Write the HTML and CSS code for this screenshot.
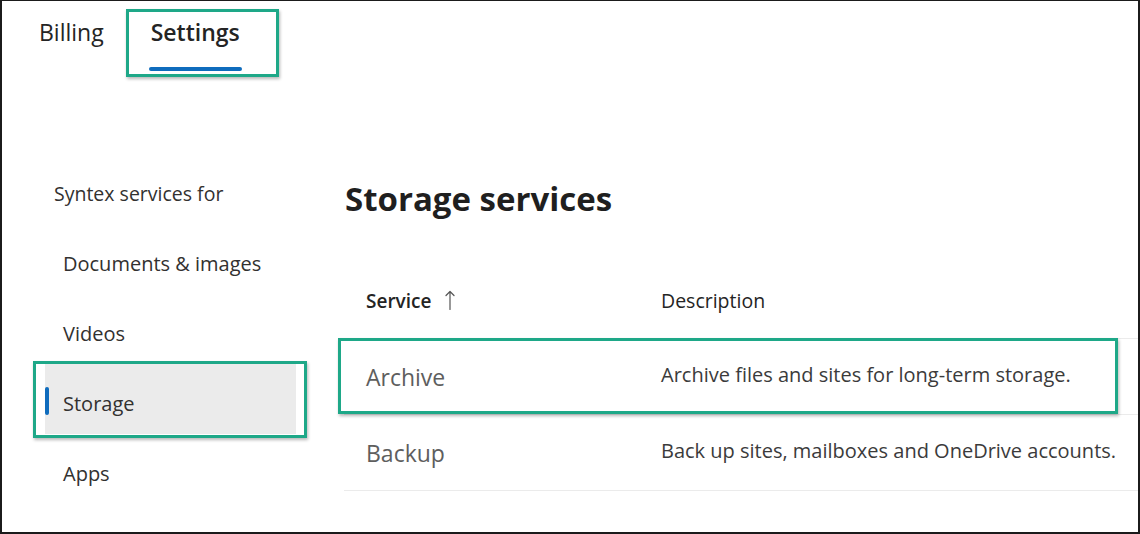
FILE: index.html
```html
<!DOCTYPE html>
<html lang="en">
<head>
<meta charset="utf-8">
<title>Storage services</title>
<link rel="stylesheet" href="styles.css">
</head>
<body>
<div class="frame">
  <div class="tabbar">
    <div class="tab">Billing</div>
    <div class="tab tab-active callout callout-tab">
      <span class="tab-label">Settings</span>
      <span class="tab-underline"></span>
    </div>
  </div>
  <div class="content">
    <nav class="sidenav">
      <div class="nav-title">Syntex services for</div>
      <div class="nav-item">Documents &amp; images</div>
      <div class="nav-item">Videos</div>
      <div class="nav-item nav-item-active callout callout-nav">
        <span class="nav-indicator"></span>
        <span>Storage</span>
      </div>
      <div class="nav-item">Apps</div>
    </nav>
    <main class="main">
      <h1 class="title">Storage services</h1>
      <div class="table">
        <div class="thead">
          <div class="th th-service">Service
            <svg class="sort-icon" width="10" height="20" viewBox="0 0 10 20"><path d="M5 1.5V19.5M1 5.5L5 1.5L9 5.5" fill="none" stroke="#555" stroke-width="1.2" stroke-linecap="round" stroke-linejoin="round"/></svg>
          </div>
          <div class="th">Description</div>
        </div>
        <div class="row callout callout-row">
          <div class="cell-service">Archive</div>
          <div class="cell-desc">Archive files and sites for long-term storage.</div>
        </div>
        <div class="row">
          <div class="cell-service">Backup</div>
          <div class="cell-desc">Back up sites, mailboxes and OneDrive accounts.</div>
        </div>
      </div>
    </main>
  </div>
</div>
</body>
</html>
```

FILE: styles.css
```css
* { box-sizing: border-box; }
html, body { margin: 0; padding: 0; background: #ffffff; }
body { font-family: "Open Sans", "Noto Sans", sans-serif; color: #242424; }

.frame {
  width: 1140px;
  height: 534px;
  border-style: solid;
  border-color: #1b1b1b;
  border-width: 1px 2px 2px 2px;
  overflow: hidden;
  background: #fff;
}

/* Tabs */
.tabbar {
  display: flex;
  align-items: flex-start;
  height: 79px;
  padding-left: 37px;
}
.tab {
  font-size: 23px;
  line-height: 30px;
  padding-top: 16px;
  color: #242424;
}
.tab-active {
  position: relative;
  margin-left: 45px;
  display: flex;
  flex-direction: column;
  align-items: stretch;
  font-weight: 600;
}
.tab-label { padding: 0 2px; }
.tab-underline {
  display: block;
  height: 4px;
  margin-top: 20px;
  border-radius: 2px;
  background: #0f6cbd;
}

/* annotation callouts (green boxes drawn over content) */
.callout::after {
  content: "";
  position: absolute;
  border: 3px solid #1ea888;
  box-shadow: 1px 2px 3px rgba(0, 0, 0, 0.28);
  pointer-events: none;
}
.callout-tab::after { top: 8px; left: -23px; right: -37px; bottom: -6px; }
.callout-nav::after { top: -3px; left: -12px; right: -11px; bottom: -4px; }
.callout-row::after { top: -1px; left: -6px; right: 20px; bottom: 0px; }

/* Body */
.content {
  display: flex;
  height: 452px;
}
.sidenav {
  width: 338px;
  flex: none;
  padding-top: 78px;
  font-size: 20px;
  color: #323130;
}
.nav-title {
  height: 70px;
  display: flex;
  align-items: center;
  padding-left: 52px;
  font-size: 19.5px;
}
.nav-item {
  height: 70px;
  display: flex;
  align-items: center;
  margin-left: 43px;
  width: 251px;
  padding-left: 18px;
}
.nav-item-active {
  position: relative;
  background: #ebebeb;
  margin-top: -4px;
  margin-bottom: 4px;
  padding-top: 8px;
  padding-left: 0;
}
.nav-indicator {
  width: 4px;
  height: 28px;
  border-radius: 2px;
  background: #0f6cbd;
  margin-right: 14px;
  margin-top: -5px;
}

/* Main */
.main {
  flex: 1;
  padding-top: 96px;
}
.title {
  margin: 0 0 0 5px;
  font-size: 33px;
  line-height: 46px;
  font-weight: 700;
  color: #1f1f1f;
}
.table { margin-top: 66px; }
.thead {
  display: grid;
  grid-template-columns: 315px 1fr;
  border-bottom: 1px solid #ebebeb;
  padding-bottom: 24px;
  margin-left: 6px;
}
.th {
  font-size: 19.5px;
  line-height: 26px;
  color: #242424;
}
.th-service {
  font-weight: 600;
  font-size: 19px;
  padding-left: 20px;
  display: flex;
  align-items: center;
  gap: 14px;
}
.sort-icon { margin-top: -2px; }
.row {
  position: relative;
  display: grid;
  grid-template-columns: 317px 1fr;
  align-items: center;
  height: 76px;
  border-bottom: 1px solid #ebebeb;
  margin-left: 4px;
}
.cell-service {
  font-size: 23px;
  color: #5e5e5e;
  padding-left: 22px;
}
.cell-desc {
  font-size: 20px;
  color: #3b3b3b;
  margin-top: -4px;
}
```
